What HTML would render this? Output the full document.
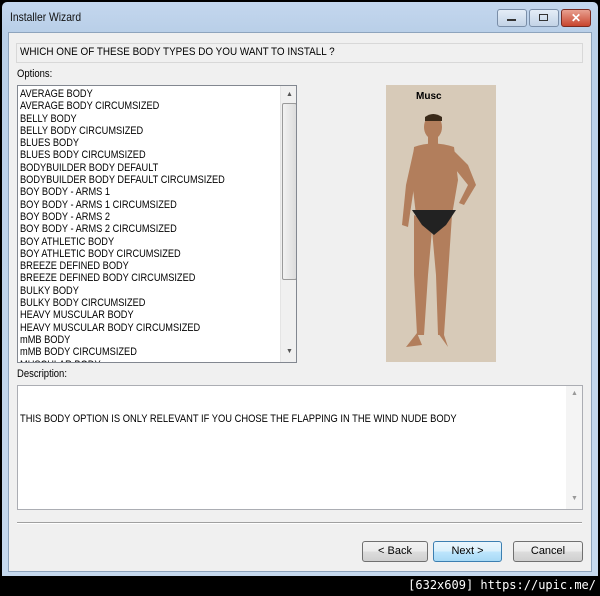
<!DOCTYPE html><html><head><style>
body{margin:0;width:600px;height:596px;background:#000;position:relative;overflow:hidden;font-family:"Liberation Sans",sans-serif;font-size:11px;color:#000}
.a{position:absolute}
.win{left:2px;top:2px;width:596px;height:574px;background:linear-gradient(#c4d7ee,#b9cfe8 30px,#c6d9ee);border-radius:5px 5px 0 0}
.cl{left:8px;top:32px;width:582px;height:538px;background:#f0f0f0;border:1px solid #8ea4bd}
.li{line-height:12.3px;white-space:nowrap;transform:scaleX(0.84);transform-origin:0 0}
.btn{height:19px;border:1px solid #707070;border-radius:3px;background:linear-gradient(#f2f2f2,#ebebeb 50%,#dddddd 50%,#cfcfcf);text-align:center;line-height:19px}
.sx{transform:scaleX(0.86);transform-origin:0 0;white-space:nowrap}
</style></head><body>
<div class="a win"></div>
<div class="a sx" style="left:10px;top:10px;font-size:12px;color:#111">Installer Wizard</div>
<div class="a" style="left:497px;top:9px;width:28px;height:16px;border:1px solid #7a8ea8;border-radius:3px;background:linear-gradient(#e4edf7,#c3d3e6)"><div class="a" style="left:9px;top:9px;width:9px;height:2px;background:#333"></div></div>
<div class="a" style="left:529px;top:9px;width:28px;height:16px;border:1px solid #7a8ea8;border-radius:3px;background:linear-gradient(#e4edf7,#c3d3e6)"><div class="a" style="left:9px;top:4px;width:7px;height:5px;border:1px solid #333"></div></div>
<div class="a" style="left:561px;top:9px;width:28px;height:16px;border:1px solid #7a2a20;border-radius:3px;background:linear-gradient(#e8a090,#c8452e);color:#fff;font-weight:bold;text-align:center;line-height:16px;font-size:12px">✕</div>
<div class="a cl"></div>
<div class="a" style="left:16px;top:43px;width:565px;height:18px;border:1px solid #d8d8d8"></div>
<div class="a sx" style="left:20px;top:46px;transform:scaleX(0.9)">WHICH ONE OF THESE BODY TYPES DO YOU WANT TO INSTALL ?</div>
<div class="a sx" style="left:17px;top:68px">Options:</div>
<div class="a" style="left:17px;top:85px;width:278px;height:276px;border:1px solid #828790;background:#fff;overflow:hidden">
<div class="a li" style="left:2px;top:2px">AVERAGE BODY<br>AVERAGE BODY CIRCUMSIZED<br>BELLY BODY<br>BELLY BODY CIRCUMSIZED<br>BLUES BODY<br>BLUES BODY CIRCUMSIZED<br>BODYBUILDER BODY DEFAULT<br>BODYBUILDER BODY DEFAULT CIRCUMSIZED<br>BOY BODY - ARMS 1<br>BOY BODY - ARMS 1 CIRCUMSIZED<br>BOY BODY - ARMS 2<br>BOY BODY - ARMS 2 CIRCUMSIZED<br>BOY ATHLETIC BODY<br>BOY ATHLETIC BODY CIRCUMSIZED<br>BREEZE DEFINED BODY<br>BREEZE DEFINED BODY CIRCUMSIZED<br>BULKY BODY<br>BULKY BODY CIRCUMSIZED<br>HEAVY MUSCULAR BODY<br>HEAVY MUSCULAR BODY CIRCUMSIZED<br>mMB BODY<br>mMB BODY CIRCUMSIZED<br>MUSCULAR BODY</div>
<div class="a" style="left:262px;top:0;width:16px;height:276px;background:#f0f0f0;border-left:1px solid #e4e4e4">
<div class="a" style="left:5px;top:5px;font-size:7px;color:#555">▲</div>
<div class="a" style="left:1px;top:17px;width:13px;height:175px;border:1px solid #9a9a9a;border-radius:2px;background:linear-gradient(90deg,#f2f2f2,#dcdcdc)"></div>
<div class="a" style="left:5px;top:262px;font-size:7px;color:#555">▼</div></div></div>
<div class="a" style="left:386px;top:85px;width:110px;height:277px;background:#d7cab8">
<div class="a" style="left:30px;top:6px;font-weight:bold;font-size:10px">Musc</div>
<svg class="a" style="left:0;top:0" width="110" height="277"><g fill="#b27e5c">
<ellipse cx="47" cy="42" rx="9" ry="12"/><rect x="42" y="50" width="10" height="10"/>
<path d="M28 62 Q47 55 68 62 L72 95 L66 130 L30 130 L26 95Z"/>
<path d="M28 64 L20 100 L16 140 L22 142 L28 102 L33 80Z"/>
<path d="M66 64 L82 80 L90 100 L78 120 L73 118 L82 100 L70 85Z"/>
<path d="M28 130 L47 140 L66 130 L62 190 L58 250 L52 250 L50 190 L46 145 L42 190 L38 250 L31 250 L28 190 Z"/>
<path d="M31 248 L20 262 L36 260Z M52 248 L62 262 L58 250Z"/></g>
<path d="M26 125 L70 125 L60 140 L48 150 L36 140Z" fill="#222"/>
<path d="M39 32 Q47 26 56 32 L56 36 L39 36Z" fill="#3a2a1a"/></svg></div>
<div class="a sx" style="left:17px;top:368px">Description:</div>
<div class="a" style="left:17px;top:385px;width:564px;height:123px;border:1px solid #abadb3;background:#fff">
<div class="a sx" style="left:2px;top:27px;transform:scaleX(0.85)">THIS BODY OPTION IS ONLY RELEVANT IF YOU CHOSE THE FLAPPING IN THE WIND NUDE BODY</div>
<div class="a" style="left:548px;top:0;width:16px;height:123px;background:#f4f4f4"><div class="a" style="left:5px;top:4px;font-size:7px;color:#999">▲</div><div class="a" style="left:5px;top:109px;font-size:7px;color:#999">▼</div></div></div>
<div class="a" style="left:17px;top:522px;width:565px;height:1px;background:#a0a0a0;border-bottom:1px solid #fff"></div>
<div class="a btn" style="left:362px;top:541px;width:64px">&lt; Back</div>
<div class="a btn" style="left:433px;top:541px;width:67px;border-color:#3c7fb1;background:linear-gradient(#eaf6fd,#d9f0fc 50%,#bee6fd 50%,#a7d9f5)">Next &gt;</div>
<div class="a btn" style="left:513px;top:541px;width:68px">Cancel</div>
<div class="a" style="right:4px;top:578px;color:#fff;font-size:12px;font-family:'DejaVu Sans Mono',monospace">[632x609] https://upic.me/</div>
</body></html>
